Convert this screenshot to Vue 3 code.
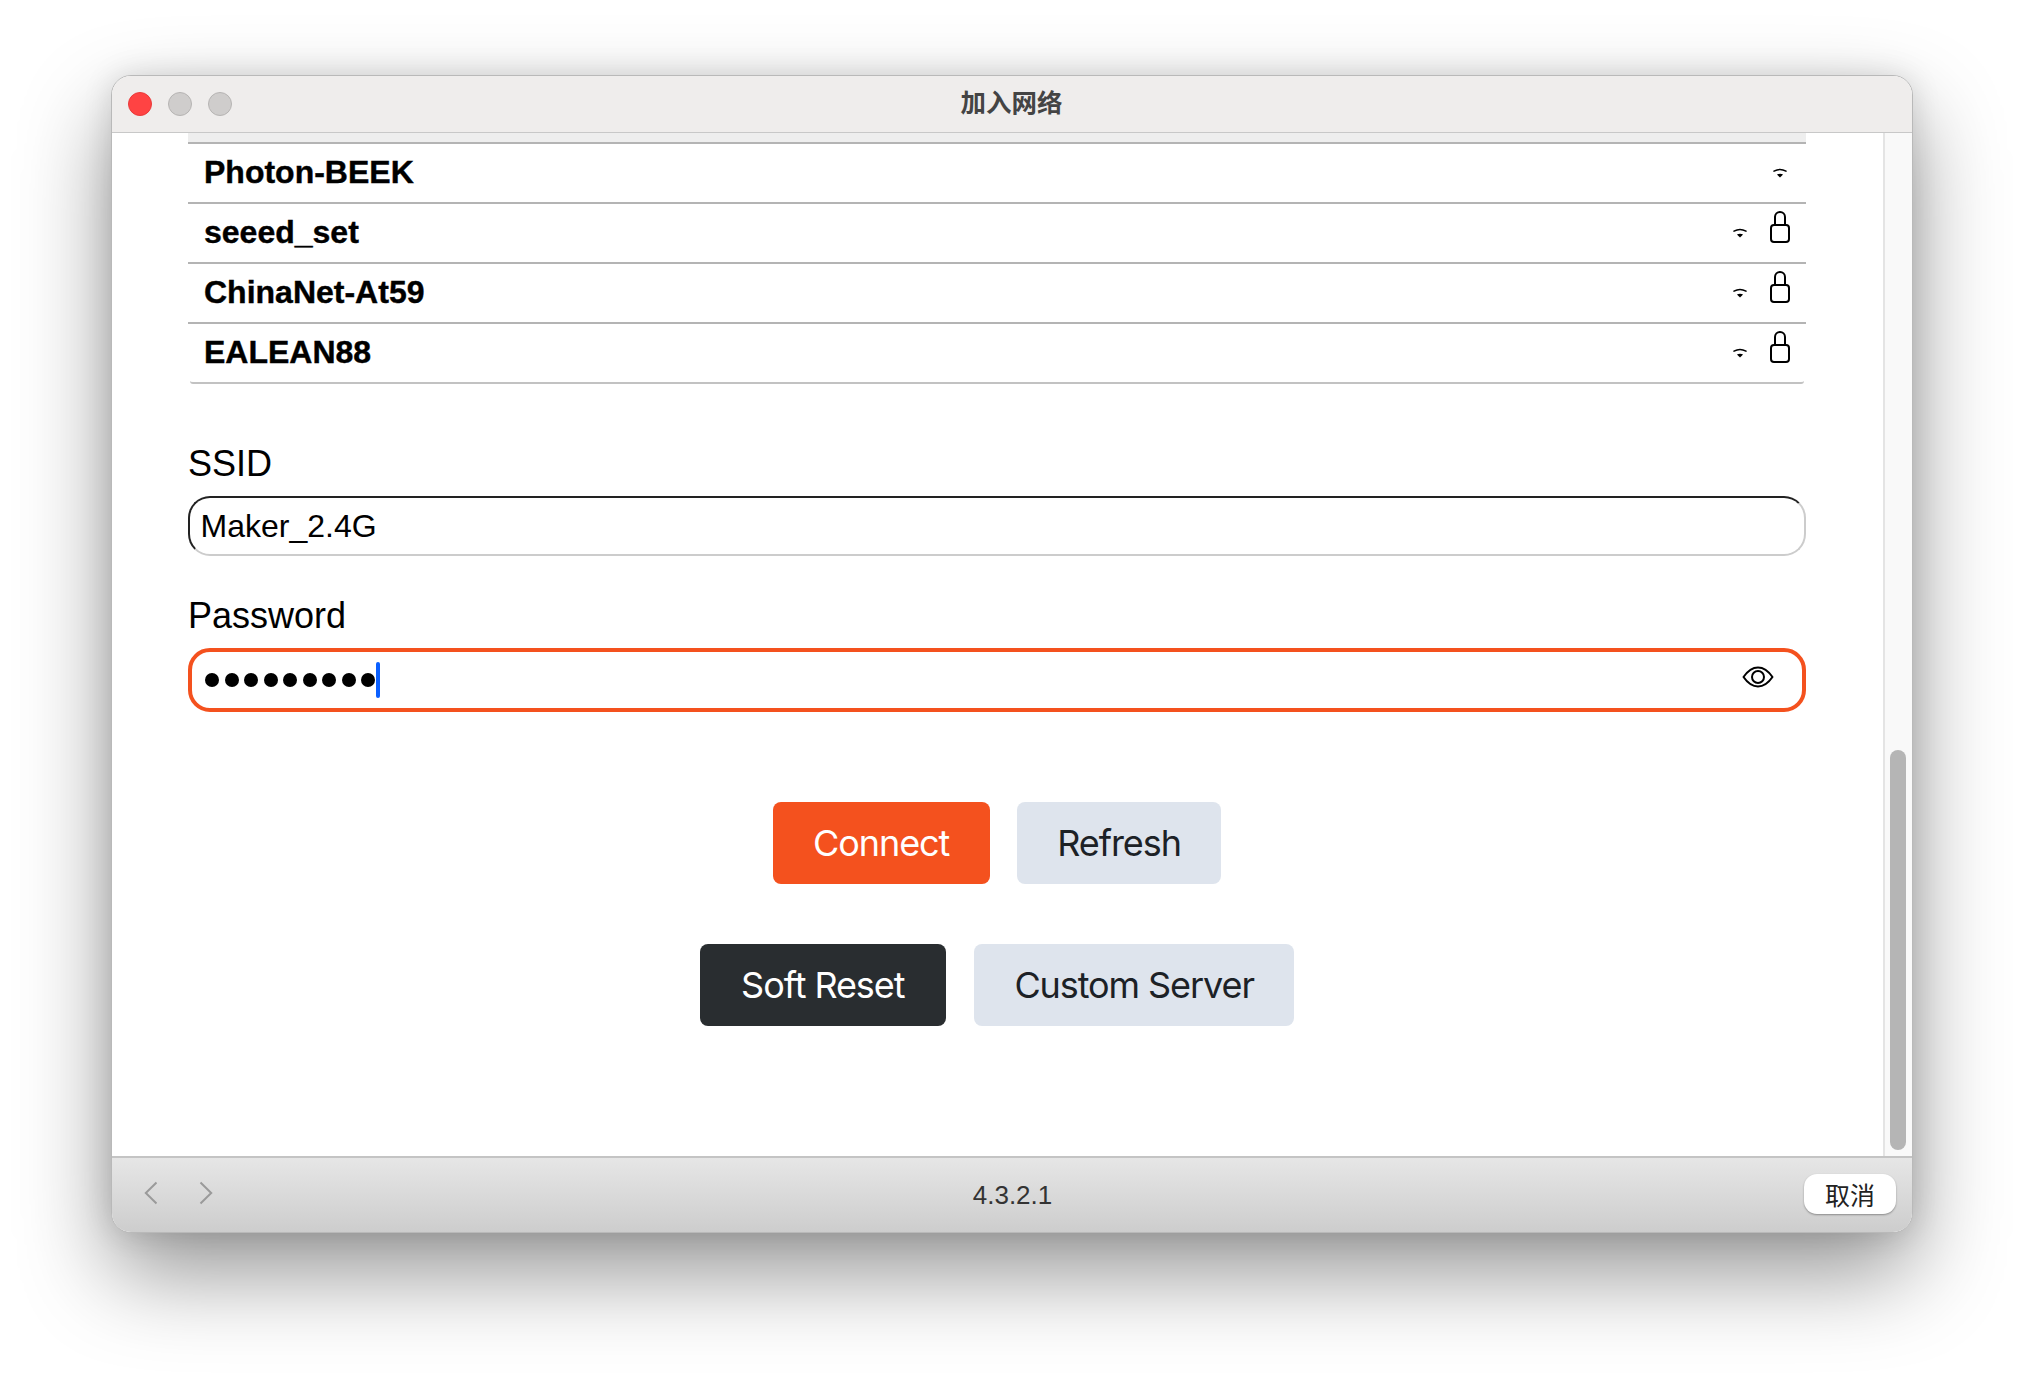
<script setup>
const networks = [
  { name: 'Photon-BEEK', locked: false },
  { name: 'seeed_set', locked: true },
  { name: 'ChinaNet-At59', locked: true },
  { name: 'EALEAN88', locked: true }
]
const dots = 9
</script>

<template>
  <div class="page">
    <div class="window">
      <header class="titlebar">
        <div class="lights">
          <span class="light red"></span>
          <span class="light"></span>
          <span class="light"></span>
        </div>
        <div class="title">加入网络</div>
      </header>

      <div class="middle">
        <main class="content">
          <div class="strip"></div>
          <ul class="list">
            <li v-for="n in networks" :key="n.name" class="row">
              <span class="name">{{ n.name }}</span>
              <span class="icons">
                <span class="cell wifi">
                  <svg width="14" height="10" viewBox="0 0 14 10">
                    <path d="M1 3.2Q7 -0.4 13 3.2" fill="none" stroke="#000" stroke-width="1.5" stroke-linecap="round" />
                    <path d="M3.9 6.6Q7 5 10.1 6.6L7 9.6Z" fill="#000" />
                  </svg>
                </span>
                <span v-if="n.locked" class="cell lock">
                  <svg width="20" height="32" viewBox="0 0 20 32">
                    <rect x="1" y="14" width="18" height="17" rx="3" fill="none" stroke="#000" stroke-width="2" />
                    <path d="M5 14V6a5 5 0 0 1 10 0V14" fill="none" stroke="#000" stroke-width="2" />
                  </svg>
                </span>
              </span>
            </li>
          </ul>

          <label class="label first">SSID</label>
          <div class="input ssid">Maker_2.4G</div>

          <label class="label second">Password</label>
          <div class="input password">
            <span v-for="d in dots" :key="d" class="dot"></span>
            <span class="caret"></span>
            <svg class="eye" width="32" height="22" viewBox="0 0 32 22">
              <path d="M1.5 11C6 4.5 11 1.5 16 1.5S26 4.5 30.5 11C26 17.5 21 20.5 16 20.5S6 17.5 1.5 11Z" fill="none" stroke="#000" stroke-width="2" stroke-linejoin="round" />
              <circle cx="16" cy="11" r="6" fill="none" stroke="#000" stroke-width="2" />
            </svg>
          </div>

          <div class="actions top">
            <button class="btn primary">Connect</button>
            <button class="btn light-btn">Refresh</button>
          </div>
          <div class="actions bottom">
            <button class="btn dark">Soft Reset</button>
            <button class="btn light-btn">Custom Server</button>
          </div>
        </main>
        <aside class="track"><div class="thumb"></div></aside>
      </div>

      <footer class="footer">
        <div class="nav">
          <svg width="14" height="24" viewBox="0 0 14 24">
            <path d="M12.5 1.5L1.8 12L12.5 22.5" fill="none" stroke="#9a9a9a" stroke-width="2" />
          </svg>
          <svg width="14" height="24" viewBox="0 0 14 24">
            <path d="M1.5 1.5L12.2 12L1.5 22.5" fill="none" stroke="#9a9a9a" stroke-width="2" />
          </svg>
        </div>
        <div class="version">4.3.2.1</div>
        <div class="footer-end"><button class="cancel">取消</button></div>
      </footer>
    </div>
  </div>
</template>

<style>
html, body { margin: 0; background: #fff; }
</style>

<style scoped>
.page {
  width: 2024px;
  height: 1380px;
  padding: 75px 111px 0 111px;
  box-sizing: border-box;
  overflow: hidden;
  background: #fff;
  font-family: "Liberation Sans", Arial, sans-serif;
}
.window {
  width: 1802px;
  height: 1158px;
  box-sizing: border-box;
  border: 1px solid #b9b9b9;
  border-radius: 20px;
  background: #fff;
  display: flex;
  flex-direction: column;
  overflow: hidden;
  box-shadow: 0 40px 90px rgba(0, 0, 0, .42), 0 0 30px rgba(0, 0, 0, .12);
}
.titlebar {
  height: 57px;
  flex: none;
  box-sizing: border-box;
  border-bottom: 1px solid #c8c8c8;
  background: #efedec;
  display: grid;
  grid-template-columns: 1fr auto 1fr;
  align-items: center;
}
.lights { display: flex; gap: 16px; padding-left: 16px; }
.light {
  width: 24px;
  height: 24px;
  box-sizing: border-box;
  border-radius: 50%;
  background: #cfcdcc;
  border: 1px solid #b6b4b3;
}
.light.red { background: #ff4343; border-color: #e93a3a; }
.title {
  grid-column: 2;
  margin-bottom: 6px;
  margin-right: 1px;
  font: 700 25.5px/1 "Noto Sans CJK SC", sans-serif;
  color: #444;
}
.middle { flex: 1; display: flex; min-height: 0; }
.content { flex: 1; padding: 0 77px 0 76px; min-width: 0; }
.strip { height: 9px; background: #eee; border-bottom: 2px solid #b4b4b4; }
.list { list-style: none; margin: 0; padding: 0; }
.row {
  height: 60px;
  box-sizing: border-box;
  padding: 0 6px 2px 16px;
  border-bottom: 2px solid #b4b4b4;
  display: flex;
  align-items: center;
  justify-content: space-between;
}
.row:last-child {
  margin: 0 2px;
  padding: 0 4px 2px 14px;
  border-bottom-color: #c2c2c2;
  border-radius: 0 0 3px 3px;
}
.name { font-size: 32px; font-weight: 700; color: #000; -webkit-text-stroke: .4px #000; }
.icons { display: flex; align-items: center; }
.cell { width: 40px; display: flex; justify-content: center; }
.wifi { margin-top: 2px; }
.lock { margin-bottom: 10px; }
.label { display: block; font-size: 36px; line-height: 40px; color: #000; }
.first { margin-top: 60px; }
.second { margin-top: 40px; }
.input {
  box-sizing: border-box;
  display: flex;
  align-items: center;
  background: #fff;
  border-radius: 22px;
}
.ssid {
  height: 60px;
  margin-top: 12px;
  padding-left: 10.5px;
  border: 2px solid;
  border-color: #222 #ccc #ccc #222;
  font-size: 32px;
  color: #000;
}
.password {
  height: 64px;
  margin-top: 12px;
  padding: 0 28px 0 13px;
  border: 4px solid #f4511e;
}
.dot {
  width: 14px;
  height: 14px;
  margin-right: 5.5px;
  border-radius: 50%;
  background: #000;
  flex: none;
}
.caret {
  width: 4px;
  height: 36px;
  margin: 0 0 0 -4.5px;
  border-radius: 2px;
  background: #0a5fff;
}
.eye { margin-left: auto; margin-bottom: 6px; }
.actions { display: flex; justify-content: center; gap: 27px; }
.top { margin-top: 90px; }
.bottom { margin-top: 60px; gap: 28px; }
.btn {
  height: 82px;
  padding: 0 40.5px;
  border: 0;
  border-radius: 8px;
  font: 400 36px "Inter", sans-serif;
  letter-spacing: -1.08px;
}
.primary { background: #f4511e; color: #fff; }
.dark { background: #292d30; color: #fff; padding: 0 41.5px; }
.light-btn { background: #dee4ed; color: #1c2126; }
.track {
  width: 29px;
  flex: none;
  box-sizing: border-box;
  border-left: 2px solid #e4e4e4;
  background: #f9f9f9;
  display: flex;
  flex-direction: column;
  justify-content: flex-end;
  padding: 0 6px 6px 5px;
}
.thumb { height: 400px; border-radius: 8px; background: #b5b5b5; }
.footer {
  height: 76px;
  flex: none;
  box-sizing: border-box;
  border-top: 2px solid #c4c4c4;
  background: linear-gradient(#e6e6e6, #cdcdcd);
  display: grid;
  grid-template-columns: 1fr auto 1fr;
  align-items: center;
}
.nav { display: flex; gap: 41px; padding-left: 32px; margin-bottom: 4px; }
.version { font-size: 26px; color: #333; margin-left: 1px; }
.footer-end { display: flex; justify-content: flex-end; padding-right: 16px; margin-bottom: 2px; }
.cancel {
  width: 92px;
  height: 40px;
  padding: 0;
  border: 0;
  border-radius: 13px;
  background: #fff;
  box-shadow: 0 1px 2px rgba(0, 0, 0, .35);
  font: 400 25px/1 "Noto Sans CJK SC", sans-serif;
  color: #222;
}
</style>
